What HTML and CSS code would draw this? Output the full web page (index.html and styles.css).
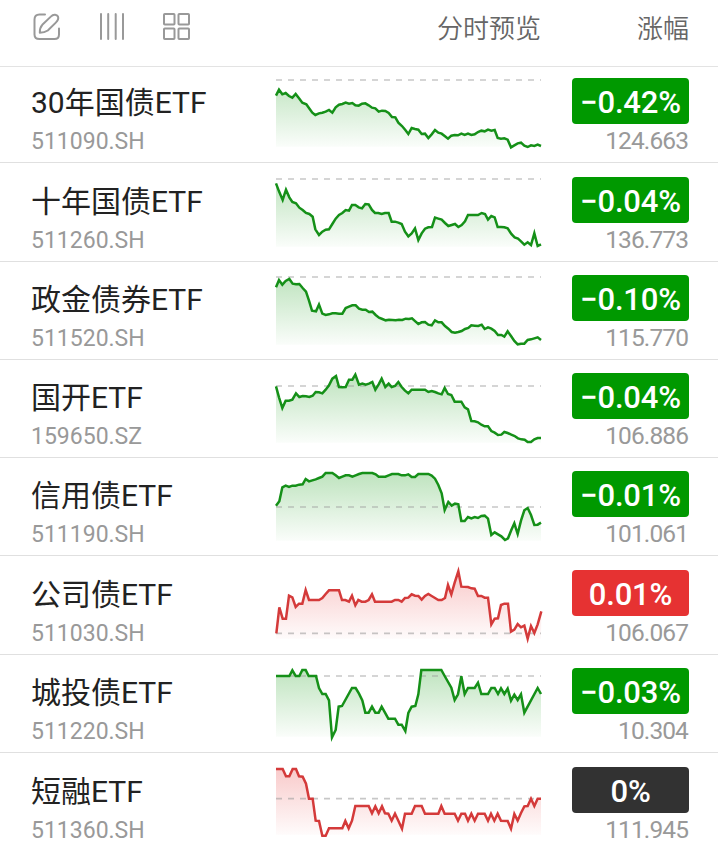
FILE: index.html
```html
<!DOCTYPE html>
<html lang="zh-CN">
<head>
    <meta charset="UTF-8">
    <title>债券ETF</title>
    <link rel="stylesheet" href="styles.css">
</head>
<body>
<svg class="defs" width="0" height="0">
    <defs>
        <linearGradient id="fillGreen" gradientUnits="userSpaceOnUse" x1="0" y1="20" x2="0" y2="230">
            <stop offset="0" stop-color="#099609" stop-opacity=".27"/>
            <stop offset="1" stop-color="#099609" stop-opacity=".02"/>
        </linearGradient>
        <linearGradient id="fillRed" gradientUnits="userSpaceOnUse" x1="0" y1="20" x2="0" y2="230">
            <stop offset="0" stop-color="#e63232" stop-opacity=".27"/>
            <stop offset="1" stop-color="#e63232" stop-opacity=".02"/>
        </linearGradient>
    </defs>
</svg>
<header class="head">
    <div class="tools">
        <svg class="icon" viewBox="0 0 28 28">
            <path d="M12 1.5H6.5Q1.5 1.5 1.5 6.5V21.5Q1.5 26 6.5 26H21.5Q26 26 26 21.5V15.5"/>
            <path d="M6.8 19.8Q6.5 15 9.3 11.8L17.8 3.6C20.8 .5 24 1.8 25 3.6C26 6.2 24.2 8.2 22.8 9.6L14.8 17.5Q11.5 19.7 6.8 19.8Z"/>
        </svg>
        <svg class="icon bars" viewBox="0 0 28 28">
            <path d="M3 1V26M10.2 1V26M17.7 1V26M25 1V26"/>
        </svg>
        <svg class="icon" viewBox="0 0 28 28">
            <rect x="1" y="1" width="10.5" height="10.5" rx=".8"/>
            <rect x="15.5" y="1" width="10.5" height="10.5" rx=".8"/>
            <rect x="1" y="15.5" width="10.5" height="10.5" rx=".8"/>
            <rect x="15.5" y="15.5" width="10.5" height="10.5" rx=".8"/>
        </svg>
    </div>
    <span class="col-chart">分时预览</span>
    <span class="col-change">涨幅</span>
</header>

<main class="list">
    <section class="row">
        <div class="info"><div class="name">30年国债ETF</div><div class="code">511090.SH</div></div>
        <svg class="chart green" viewBox="24 9 798 270">
            <path class="base" d="M24 30H819"/>
            <polyline points="24,77 33,59 43,73 53,69 63,78 73,83 83,72 93,85 103,98 115,103 125,117 133,128 142,135 153,130 163,128 173,125 183,120 193,128 203,112 213,104 223,102 233,98 243,101 253,99 262,106 272,107 282,101 292,100 302,106 312,113 322,115 332,125 342,122 352,123 362,129 372,141 382,142 391,158 402,168 412,180 421,192 431,174 441,177 451,179 461,192 471,191 481,204 491,193 501,180 511,188 521,191 531,199 540,206 550,197 560,195 570,196 580,191 590,195 600,191 610,195 620,193 630,186 640,182 650,184 660,179 670,182 680,180 689,204 699,206 709,205 719,209 729,232 739,226 749,220 759,218 769,227 779,231 789,226 799,228 809,224 819,228"/>
        </svg>
        <div class="quote"><div class="badge green">−0.42%</div><div class="price">124.663</div></div>
    </section>
    <section class="row">
        <div class="info"><div class="name">十年国债ETF</div><div class="code">511260.SH</div></div>
        <svg class="chart green" viewBox="24 6 798 270">
            <path class="base" d="M24 27H819"/>
            <polyline points="24,40 33,64 44,90 54,59 64,82 73,96 84,100 94,113 104,120 114,129 124,132 134,140 142,178 153,195 163,185 173,179 183,178 193,162 203,146 213,135 223,129 233,120 243,122 252,105 262,105 272,112 282,115 292,102 302,103 312,120 321,129 331,129 341,132 351,129 362,129 371,155 381,155 391,158 401,162 411,185 421,199 431,190 441,175 451,210 461,190 471,176 481,172 492,171 501,143 511,146 521,149 531,159 541,168 551,165 561,162 571,171 581,165 591,154 600,135 610,135 620,135 630,135 641,129 651,132 660,149 670,138 680,142 689,171 699,171 709,172 719,175 730,192 740,202 750,206 759,214 769,224 779,217 789,225 799,190 809,228 819,223"/>
        </svg>
        <div class="quote"><div class="badge green">−0.04%</div><div class="price">136.773</div></div>
    </section>
    <section class="row">
        <div class="info"><div class="name">政金债券ETF</div><div class="code">511520.SH</div></div>
        <svg class="chart green" viewBox="24 6 798 270">
            <path class="base" d="M24 27H819"/>
            <polyline points="24,58 33,36 43,50 53,39 64,33 74,47 84,49 94,48 104,60 114,71 123,98 132,128 144,130 153,110 163,137 173,141 183,139 193,136 203,136 213,137 223,137 233,120 243,116 253,112 263,112 273,122 283,125 293,125 303,132 313,131 323,141 333,149 343,153 353,157 363,155 373,156 383,157 393,155 403,156 413,152 423,153 432,151 442,160 451,168 461,163 471,162 481,170 491,172 501,157 511,163 521,163 531,174 541,182 551,192 561,194 571,192 581,189 591,183 601,180 610,172 620,173 631,174 641,170 650,183 660,178 670,182 680,189 690,201 700,201 709,206 719,190 729,204 739,219 749,229 759,227 769,227 779,216 789,214 799,211 809,208 819,216"/>
        </svg>
        <div class="quote"><div class="badge green">−0.10%</div><div class="price">115.770</div></div>
    </section>
    <section class="row">
        <div class="info"><div class="name">国开ETF</div><div class="code">159650.SZ</div></div>
        <svg class="chart green" viewBox="24 6 798 270">
            <path class="base" d="M24 60H819"/>
            <polyline points="24,61 33,94 43,126 53,104 63,104 73,101 84,82 94,93 104,90 114,91 124,93 134,89 143,78 153,79 163,82 173,71 183,58 193,38 204,30 213,63 223,64 233,63 243,41 253,41 262,26 273,56 283,53 293,56 303,53 313,48 322,71 332,55 341,38 352,63 362,53 371,63 381,60 391,48 401,63 411,74 421,82 431,71 441,71 451,71 461,71 471,71 481,78 491,75 501,78 511,82 521,85 530,66 540,84 550,87 560,107 570,107 580,107 590,124 600,130 610,165 620,166 630,169 640,176 650,181 660,181 670,195 680,200 690,207 700,206 709,198 719,201 730,206 740,210 750,217 760,220 770,221 779,228 789,228 799,220 809,216 819,216"/>
        </svg>
        <div class="quote"><div class="badge green">−0.04%</div><div class="price">106.886</div></div>
    </section>
    <section class="row">
        <div class="info"><div class="name">信用债ETF</div><div class="code">511190.SH</div></div>
        <svg class="chart green" viewBox="24 6 798 270">
            <path class="base" d="M24 129H819"/>
            <polyline points="24,125 34,112 43,70 53,65 63,69 73,65 83,65 93,62 104,61 113,45 123,52 133,49 143,46 153,42 163,38 173,27 183,27 193,27 203,34 213,42 223,38 233,34 243,34 253,38 263,34 273,30 283,27 293,27 313,27 323,31 332,38 352,38 362,34 372,30 391,30 401,34 411,34 421,31 431,39 441,39 451,30 481,30 491,35 501,44 511,63 521,88 530,138 541,114 551,125 561,119 571,121 580,171 590,171 600,159 610,163 620,159 630,162 640,156 650,155 660,164 670,213 680,205 690,211 700,217 711,228 720,223 730,198 739,178 749,210 759,170 769,139 779,132 789,153 799,183 809,182 819,176"/>
        </svg>
        <div class="quote"><div class="badge green">−0.01%</div><div class="price">101.061</div></div>
    </section>
    <section class="row">
        <div class="info"><div class="name">公司债ETF</div><div class="code">511030.SH</div></div>
        <svg class="chart red" viewBox="24 9 798 270">
            <path class="base" d="M24 214H819"/>
            <polyline points="25,214 34,136 44,170 54,170 63,101 73,106 83,135 93,125 103,125 113,84 123,114 153,114 163,108 173,96 183,85 213,85 222,114 232,114 243,119 252,101 262,130 271,114 281,119 292,119 302,114 312,97 321,119 371,119 381,114 391,114 401,119 411,108 421,107 431,97 441,101 451,102 461,113 471,102 481,96 491,102 501,108 511,114 521,114 531,108 540,69 550,97 560,62 571,28 580,74 600,75 610,79 620,80 630,102 640,102 650,107 660,107 670,187 680,170 690,169 699,129 709,125 720,125 729,209 739,203 749,186 759,196 769,191 779,230 789,192 799,213 809,187 820,148"/>
        </svg>
        <div class="quote"><div class="badge red">0.01%</div><div class="price">106.067</div></div>
    </section>
    <section class="row">
        <div class="info"><div class="name">城投债ETF</div><div class="code">511220.SH</div></div>
        <svg class="chart green" viewBox="24 9 798 270">
            <path class="base" d="M24 48H819"/>
            <polyline points="24,48 64,48 73,31 83,48 94,48 103,30 113,30 122,48 144,48 153,84 163,102 173,102 183,121 192,232 203,210 212,140 222,138 252,84 263,84 273,101 283,121 292,158 302,158 312,140 322,158 332,158 341,140 351,158 361,176 381,176 391,194 401,194 412,213 421,159 431,140 442,138 451,103 460,30 520,30 530,48 550,83 560,120 570,103 580,49 590,102 600,84 620,84 630,68 640,102 660,102 670,84 680,84 690,102 699,85 709,102 719,86 729,122 739,104 749,120 759,103 769,158 809,84 819,102"/>
        </svg>
        <div class="quote"><div class="badge green">−0.03%</div><div class="price">10.304</div></div>
    </section>
    <section class="row">
        <div class="info"><div class="name">短融ETF</div><div class="code">511360.SH</div></div>
        <svg class="chart red" viewBox="24 12 798 270">
            <path class="base" d="M24 122H819"/>
            <polyline points="24,33 44,33 54,55 64,55 74,33 84,33 93,55 104,56 114,77 123,122 134,122 143,188 153,189 163,233 173,233 183,211 223,211 232,189 242,211 252,188 262,144 302,144 312,166 322,145 332,166 342,145 351,166 361,167 371,188 381,167 391,188 402,212 411,167 431,167 441,144 461,144 471,167 511,167 520,144 530,167 560,167 570,188 580,167 591,167 600,188 610,167 620,188 630,167 650,167 660,188 669,167 679,188 689,167 699,188 719,189 729,212 739,168 749,188 759,165 769,145 779,144 789,122 799,144 809,122 819,122"/>
        </svg>
        <div class="quote"><div class="badge flat">0%</div><div class="price">111.945</div></div>
    </section>
</main>

<script>
    // close each line down to the bottom of the plot to make the shaded area
    document.querySelectorAll('.chart').forEach(chart => {
        const line = chart.querySelector('polyline');
        const area = document.createElementNS('http://www.w3.org/2000/svg', 'polygon');
        area.setAttribute('points', '24,230 ' + line.getAttribute('points') + ' 819,230');
        chart.insertBefore(area, chart.firstChild);
    });
</script>
</body>
</html>
```
FILE: styles.css
```css
*{box-sizing:border-box;}
body{margin:0;height:847px;overflow:hidden;background:#fff;color:#222;font-family:Roboto,"Noto Sans CJK SC",sans-serif;}
.defs{display:block;}
.head{display:flex;align-items:flex-start;height:67px;padding:10px 29px 0 32px;border-bottom:1px solid #e3e3e3;font-size:26px;line-height:38px;color:#666;}
.tools{display:flex;gap:37px;padding:3px 0 0 1px;}
.icon{display:block;width:28px;height:28px;fill:none;stroke:#999;stroke-width:2;stroke-linecap:round;stroke-linejoin:round;}
.head span{font-weight:350;}
.col-chart{margin-left:auto;}
.col-change{margin-left:96px;}
.list{display:grid;grid-template-rows:96px 99px 98px 98px 98px 99px 98px 99px;}
.row{display:grid;grid-template-columns:245px 266px 1fr;align-items:end;padding:0 29px 0 31px;border-bottom:1px solid #e0e0e0;}
.info{height:84px;}
.name{font-size:30px;line-height:44px;padding-top:3px;height:49px;white-space:nowrap;font-weight:400;}
.code{font-size:23px;line-height:30px;color:#999;font-weight:400;}
.chart{display:block;width:266px;height:90px;margin-bottom:-1px;overflow:visible;}
.chart polyline{fill:none;stroke-width:7.5;stroke-linejoin:miter;}
.chart.green polyline{stroke:#159018;}
.chart.red polyline{stroke:#d43a3a;}
.chart.green polygon{fill:url(#fillGreen);}
.chart.red polygon{fill:url(#fillRed);}
.base{stroke:#999;stroke-opacity:.55;stroke-width:5;stroke-dasharray:18 18;fill:none;}
.quote{height:84px;justify-self:end;width:117px;text-align:right;}
.badge{height:46px;border-radius:4px;color:#fff;font-size:31px;line-height:50px;text-align:center;font-weight:500;letter-spacing:-.2px;white-space:nowrap;}
.badge.green{background:#090;}
.badge.red{background:#e63232;}
.badge.flat{background:#323232;}
.price{font-size:24.5px;line-height:34px;color:#999;letter-spacing:-.9px;padding-right:1px;}
```
